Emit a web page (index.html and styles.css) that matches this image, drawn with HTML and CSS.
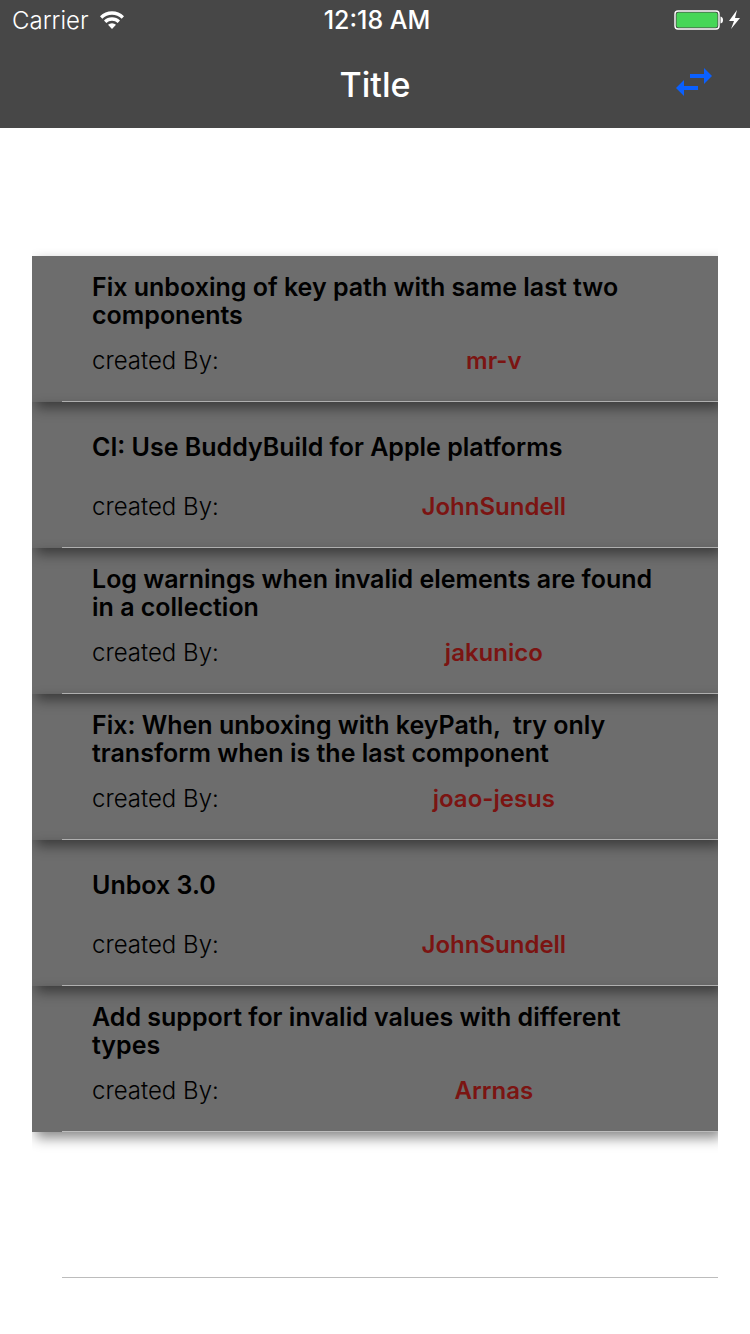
FILE: index.html
```html
<!DOCTYPE html>
<html lang="en">
<head>
<meta charset="utf-8">
<meta name="viewport" content="width=device-width, initial-scale=1">
<title>Title</title>
<link rel="stylesheet" href="styles.css">
</head>
<body>
<header class="top">
  <div class="status">
    <div class="status-left">
      <span class="carrier">Carrier</span>
      <svg class="wifi" width="26" height="18" viewBox="0 0 26 18" aria-hidden="true">
        <path d="M1 5.2A17.2 17.2 0 0 1 25 5.2L22.7 7.7A13.8 13.8 0 0 0 3.3 7.7Z"/>
        <path d="M5 9.6A11.5 11.5 0 0 1 21 9.6L18.7 12A8.1 8.1 0 0 0 7.3 12Z"/>
        <path d="M9 13.8A5.8 5.8 0 0 1 17 13.8L13 18Z"/>
      </svg>
    </div>
    <time class="clock">12:18 AM</time>
    <div class="status-right">
      <svg width="68" height="22" viewBox="0 0 68 22" aria-hidden="true">
        <rect x="1" y="2" width="44" height="18" rx="3" fill="none" stroke="#fff" stroke-width="1.4"/>
        <rect x="2.5" y="3.5" width="41" height="15" rx="2" fill="#46d657"/>
        <path d="M46.5 7.5Q49 8 49 11T46.5 14.5Z" fill="#fff"/>
        <path d="M63 1L55 12H60L57 20L66 9H61Z" fill="#fff"/>
      </svg>
    </div>
  </div>
  <nav class="bar">
    <h1 class="title">Title</h1>
    <button class="swap" type="button" aria-label="Swap">
      <svg width="36" height="28" viewBox="0 0 36 28" aria-hidden="true">
        <path d="M14 6H28V0L36 8L28 16V10H14ZM22 18H8V12L0 20L8 28V22H22Z" fill="#0a60ff"/>
      </svg>
    </button>
  </nav>
</header>
<main class="content">
  <ul class="list">
    <li class="row"><article class="card"><h2 class="name">Fix unboxing of key path with same last two components</h2><p class="meta"><span class="label">created By:</span><span class="author">mr-v</span></p></article></li>
    <li class="row"><article class="card"><h2 class="name">CI: Use BuddyBuild for Apple platforms</h2><p class="meta"><span class="label">created By:</span><span class="author">JohnSundell</span></p></article></li>
    <li class="row"><article class="card"><h2 class="name">Log warnings when invalid elements are found in a collection</h2><p class="meta"><span class="label">created By:</span><span class="author">jakunico</span></p></article></li>
    <li class="row"><article class="card"><h2 class="name">Fix: When unboxing with keyPath,  try only transform when is the last component</h2><p class="meta"><span class="label">created By:</span><span class="author">joao-jesus</span></p></article></li>
    <li class="row"><article class="card"><h2 class="name">Unbox 3.0</h2><p class="meta"><span class="label">created By:</span><span class="author">JohnSundell</span></p></article></li>
    <li class="row"><article class="card"><h2 class="name">Add support for invalid values with different types</h2><p class="meta"><span class="label">created By:</span><span class="author">Arrnas</span></p></article></li>
    <li class="row row-empty" aria-hidden="true"></li>
  </ul>
</main>
</body>
</html>
```
FILE: styles.css
```css
* {
  box-sizing: border-box;
}

body {
  margin: 0;
  background: #fff;
  color: #000;
  font-family: Inter, "Noto Sans", sans-serif;
  font-size: 24px;
}

.top {
  background: #474747;
  color: #fff;
}

.status {
  display: grid;
  grid-template-columns: 1fr auto 1fr;
  align-items: center;
  height: 40px;
  padding: 0 8px 0 12px;
}

.status-left {
  display: flex;
  align-items: center;
  gap: 10px;
}

.carrier {
  font-weight: 300;
}

.wifi {
  fill: #fff;
}

.clock {
  font-size: 25px;
  font-weight: 500;
}

.status-right {
  display: flex;
  justify-content: flex-end;
}

.bar {
  display: grid;
  grid-template-columns: 1fr auto 1fr;
  align-items: center;
  height: 88px;
  padding: 0 38px;
}

.title {
  grid-column: 2;
  margin: 0;
  font-size: 34px;
  font-weight: 500;
}

.swap {
  display: flex;
  justify-self: end;
  padding: 0 0 4px;
  border: 0;
  background: none;
  cursor: pointer;
}

.content {
  padding: 120px 32px 0;
}

.list {
  margin: 0;
  padding: 8px 0 0;
  list-style: none;
  overflow: hidden;
}

.row {
  height: 146px;
  background: #6d6d6d;
}

.row-empty {
  margin-left: 30px;
  border-bottom: 1px solid #bcbcbc;
  background: none;
}

.card {
  position: relative;
  height: 100%;
  padding: 15px 60px 0;
  box-shadow: 4px 6px 12px rgba(0, 0, 0, 0.46);
}

.card::after {
  content: "";
  position: absolute;
  right: 0;
  bottom: 0;
  left: 30px;
  height: 1px;
  background: #bcbcbc;
}

.name {
  display: flex;
  align-items: center;
  height: 60px;
  margin: 0;
  font-size: 25px;
  font-weight: 600;
  line-height: 28px;
  white-space: pre-wrap;
}

.meta {
  display: grid;
  grid-template-columns: 42% 58%;
  margin: 15px 0 0;
  line-height: 30px;
}

.label {
  font-weight: 300;
}

.author {
  color: #7b1412;
  font-weight: 600;
  text-align: center;
}
```
